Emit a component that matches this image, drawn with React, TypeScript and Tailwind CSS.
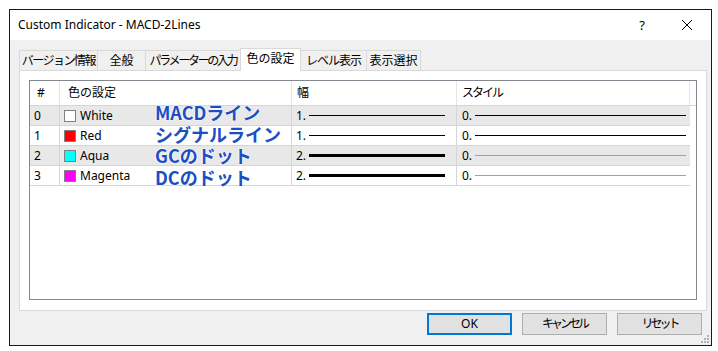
import React from "react";

const font = { fontFamily: '"Noto Sans", "Noto Sans CJK JP", sans-serif' };

const rows = [
  { n: "0", name: "White", color: "#ffffff", w: "1.", thick: 1, styleGray: false, bg: "bg-[#e8e8e8]" },
  { n: "1", name: "Red", color: "#ff0000", w: "1.", thick: 1, styleGray: false, bg: "bg-white" },
  { n: "2", name: "Aqua", color: "#00ffff", w: "2.", thick: 3, styleGray: true, bg: "bg-[#e8e8e8]" },
  { n: "3", name: "Magenta", color: "#ff00ff", w: "2.", thick: 3, styleGray: true, bg: "bg-white" },
];

const tabs = [
  { label: "バージョン情報", w: "w-[79px]", t: "tracking-[-1.5px]" },
  { label: "全般", w: "w-[49px]", t: "tracking-[0px]" },
  { label: "パラメーターの入力", w: "w-[96px]", t: "tracking-[-2.3px]" },
];
const tabs2 = [
  { label: "レベル表示", w: "w-[67px]", t: "tracking-[-1px]" },
  { label: "表示選択", w: "w-[55px]", t: "tracking-[0px]" },
];

const overlay = ["MACDライン", "シグナルライン", "GCのドット", "DCのドット"];

export default function App() {
  return (
    <div className="w-[718px] h-[351px] bg-white pt-[9px] pl-[9px] text-[12px] text-black" style={font}>
      <div className="w-[703px] h-[337px] border border-[#1a1a1a] flex flex-col">
        {/* title bar */}
        <div className="h-[30px] bg-white flex items-center pl-[8px] shrink-0">
          <span className="text-[12px] text-black">Custom Indicator - MACD-2Lines</span>
          <div className="flex-1" />
          <span className="text-[13px] mr-[36px] mt-[1px]">?</span>
          <svg width="12" height="12" viewBox="0 0 12 12" className="mr-[18px]">
            <path d="M1 1 L11 11 M11 1 L1 11" stroke="#000" strokeWidth="1" />
          </svg>
        </div>
        {/* body */}
        <div className="flex-1 bg-[#f0f0f0] flex flex-col pl-[9px] pr-[4px] relative">
          {/* tabs */}
          <div className="flex items-end h-[30px] shrink-0">
            {tabs.map((tb) => (
              <div
                key={tb.label}
                className={`${tb.w} ${tb.t} h-[20px] whitespace-nowrap overflow-hidden border border-b-0 border-[#d9d9d9] -mr-px bg-[#f0f0f0] flex items-center justify-center text-[12px]`}
              >
                {tb.label}
              </div>
            ))}
            <div className="w-[61px] h-[23px] whitespace-nowrap border border-b-0 border-[#d9d9d9] -mr-px bg-white flex items-center justify-center text-[12px] relative z-10 -mb-px pb-[2px]">
              色の設定
            </div>
            {tabs2.map((tb) => (
              <div
                key={tb.label}
                className={`${tb.w} ${tb.t} h-[20px] whitespace-nowrap overflow-hidden border border-b-0 border-[#d9d9d9] -mr-px bg-[#f0f0f0] flex items-center justify-center text-[12px]`}
              >
                {tb.label}
              </div>
            ))}
          </div>
          {/* panel */}
          <div className="w-[688px] h-[241px] bg-white border border-[#d9d9d9] p-[9px]">
            <div className="w-[668px] h-[220px] border border-[#828790] bg-white relative">
              {/* header */}
              <div className="flex h-[25px] border-b border-[#d5d5d5] items-center">
                <div className="w-[30px] h-full border-r border-[#e5e5e5] pl-[7px] flex items-center">#</div>
                <div className="w-[232px] h-full border-r border-[#e5e5e5] pl-[8px] flex items-center">色の設定</div>
                <div className="w-[165px] h-full border-r border-[#e5e5e5] pl-[5px] flex items-center">幅</div>
                <div className="w-[233px] h-full border-r border-[#e5e5e5] pl-[5px] flex items-center tracking-[-2px]">スタイル</div>
              </div>
              {rows.map((r) => (
                <div key={r.n} className="flex h-[20px]">
                  <div className={`w-[660px] flex h-full border-b border-[#d5d5d5] ${r.bg}`}>
                    <div className="w-[30px] h-full border-r border-[#d5d5d5] pl-[4px] flex items-center">{r.n}</div>
                    <div className="w-[232px] h-full border-r border-[#d5d5d5] pl-[4px] flex items-center">
                      <div className="w-[12px] h-[12px] border border-[#808080]" style={{ backgroundColor: r.color }} />
                      <span className="ml-[4px]">{r.name}</span>
                    </div>
                    <div className="w-[165px] h-full border-r border-[#d5d5d5] pl-[4px] flex items-center">
                      <span className="w-[13px]">{r.w}</span>
                      <div className="w-[136px] bg-black" style={{ height: r.thick }} />
                    </div>
                    <div className="w-[233px] h-full pl-[5px] flex items-center">
                      <span className="w-[13px]">0.</span>
                      <div className={`w-[211px] h-px ${r.styleGray ? "bg-[#a0a0a0]" : "bg-black"}`} />
                    </div>
                  </div>
                </div>
              ))}
              {/* overlay labels */}
              <div className="absolute left-[125px] top-[21px] flex flex-col">
                {overlay.map((t) => (
                  <div
                    key={t}
                    className="h-[21.5px] leading-[21.5px] text-[18px] font-bold text-[#1a4fc4] [text-shadow:0_0_2px_#fff,0_0_2px_#fff,0_0_1px_#fff]"
                    style={{ fontFamily: '"Noto Sans CJK JP", sans-serif' }}
                  >
                    {t}
                  </div>
                ))}
              </div>
            </div>
          </div>
          {/* buttons */}
          <div className="flex justify-end gap-[10px] mt-[2px] pr-[5px]">
            <div className="w-[85px] h-[22px] border-2 border-[#0078d7] bg-[#e1e1e1] flex items-center justify-center">OK</div>
            <div className="w-[85px] h-[22px] border border-[#adadad] bg-[#e1e1e1] flex items-center justify-center tracking-[-3px] whitespace-nowrap">キャンセル</div>
            <div className="w-[85px] h-[22px] border border-[#adadad] bg-[#e1e1e1] flex items-center justify-center tracking-[-3px] whitespace-nowrap">リセット</div>
          </div>
          <svg width="9" height="9" viewBox="0 0 9 9" className="absolute right-[1px] bottom-[1px]">
            {[
              [6, 0],
              [3, 3],
              [6, 3],
              [0, 6],
              [3, 6],
              [6, 6],
            ].map(([x, y]) => (
              <rect key={`${x}-${y}`} x={x} y={y} width="2" height="2" fill="#b0b0b0" />
            ))}
          </svg>
        </div>
      </div>
    </div>
  );
}
